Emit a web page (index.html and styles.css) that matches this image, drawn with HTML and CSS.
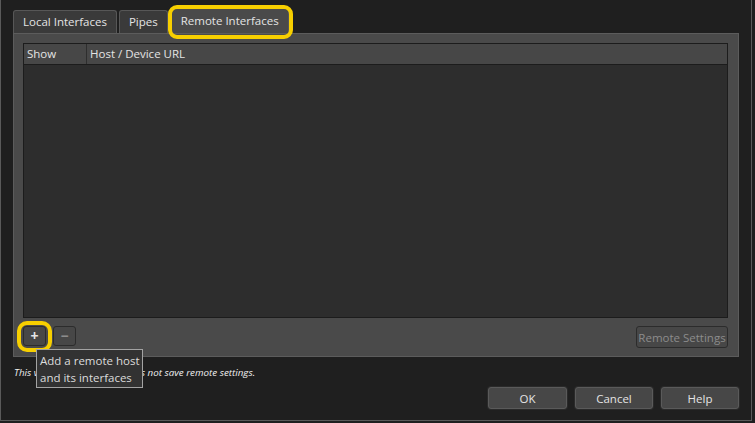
FILE: index.html
```html
<!DOCTYPE html>
<html>
<head>
    <title>Manage Interfaces</title>
    <link rel="stylesheet" href="styles.css">
</head>
<body>

    <div class="dialog">
        <div class="tabs">
            <div class="tab">Local Interfaces</div>
            <div class="tab">Pipes</div>
            <div class="tab active">Remote Interfaces<span class="ring tab-ring"></span></div>
        </div>

        <div class="pane">
            <div class="table">
                <div class="thead">
                    <div class="th show">Show</div>
                    <div class="th">Host / Device URL</div>
                </div>
                <div class="tbody"></div>
            </div>
            <div class="pane-actions">
                <button class="tool add">+<span class="ring add-ring"></span></button>
                <button class="tool" disabled>&minus;</button>
                <button class="btn settings" disabled>Remote Settings</button>
            </div>
        </div>

        <p class="note">This version of Wireshark does not save remote settings.</p>

        <div class="footer">
            <button class="btn">OK</button>
            <button class="btn">Cancel</button>
            <button class="btn">Help</button>
        </div>

        <!-- tooltip over the + button -->
        <div class="tooltip">Add a remote host<br>and its interfaces</div>
    </div>

</body>
</html>
```

FILE: styles.css
```css
body {
    margin: 0;
    padding: 0;
    background: #1f1f1f;
    font-family: "Open Sans", "Noto Sans", sans-serif;
    font-size: 11.5px;
    color: #e4e4e4;
}

.dialog {
    position: relative;
    box-sizing: border-box;
    width: 752px;
    height: 421px;
    padding: 0 12px;
    border: 1px solid #5a5a5a;
    border-top: none;
    display: flex;
    flex-direction: column;
}

/* tabs */
.tabs {
    display: flex;
    align-items: flex-end;
    gap: 2px;
    margin-top: 10px;
    height: 23px;
}

.tab {
    box-sizing: border-box;
    height: 23px;
    line-height: 22px;
    padding: 0 9px;
    background: #3a3a3a;
    border: 1px solid #575757;
    border-bottom: none;
    border-radius: 3px 3px 0 0;
    white-space: nowrap;
}

.tab.active {
    position: relative;
    height: 25px;
    line-height: 24px;
    margin-left: 1px;
    background: #4a4a4a;
}

.ring {
    position: absolute;
    border: 4px solid #f7cf00;
    pointer-events: none;
}

.tab-ring {
    top: -4px;
    bottom: -6px;
    left: -4px;
    right: -5px;
    border-radius: 9px;
}

/* pane */
.pane {
    box-sizing: border-box;
    height: 324px;
    padding: 9px 10px 8px 9px;
    background: #4a4a4a;
    border: 1px solid #5c5c5c;
    display: flex;
    flex-direction: column;
}

.table {
    flex: 1;
    display: flex;
    flex-direction: column;
    border: 1px solid #1c1c1c;
    background: #2d2d2d;
}

.thead {
    display: flex;
    height: 20px;
    background: #474747;
    border-bottom: 1px solid #1c1c1c;
}

.th {
    padding-left: 3px;
    line-height: 20px;
}

.th.show {
    width: 59px;
    border-right: 1px solid #2e2e2e;
}

.tbody {
    flex: 1;
}

.pane-actions {
    display: flex;
    align-items: flex-start;
    gap: 7px;
    margin-top: 8px;
    height: 22px;
}

button {
    font-family: inherit;
    font-size: 11.5px;
    color: #e4e4e4;
    background: #474747;
    border: 1px solid #2c2c2c;
    border-radius: 3px;
    padding: 0;
    margin: 0;
}

button:disabled {
    color: #8c8c8c;
}

.tool {
    position: relative;
    width: 23px;
    height: 20px;
    font-size: 14px;
    font-weight: bold;
    line-height: 16px;
}

.add-ring {
    top: -6px;
    bottom: -7px;
    left: -7px;
    right: -7px;
    border-radius: 10px;
}

.btn {
    height: 22px;
    width: 78px;
}

.settings {
    width: 92px;
    margin-left: auto;
}

.note {
    margin: 9px 0 0 1px;
    font-size: 9.8px;
    font-style: italic;
    color: #f0f0f0;
}

.footer {
    display: flex;
    justify-content: flex-end;
    gap: 8px;
    margin-top: auto;
    margin-bottom: 11px;
}

.footer .btn {
    border-color: #5a5a5a;
    box-shadow: 0 0 0 1px #2a2a2a;
}

.footer .btn:first-child {
    width: 79px;
}

.tooltip {
    position: absolute;
    left: 35px;
    top: 349px;
    box-sizing: border-box;
    width: 107px;
    height: 39px;
    padding: 2px 3px;
    background: #323232;
    border: 1px solid #a3a3a3;
    font-size: 11.5px;
    line-height: 17px;
    color: #dcdcdc;
    white-space: nowrap;
}
```
